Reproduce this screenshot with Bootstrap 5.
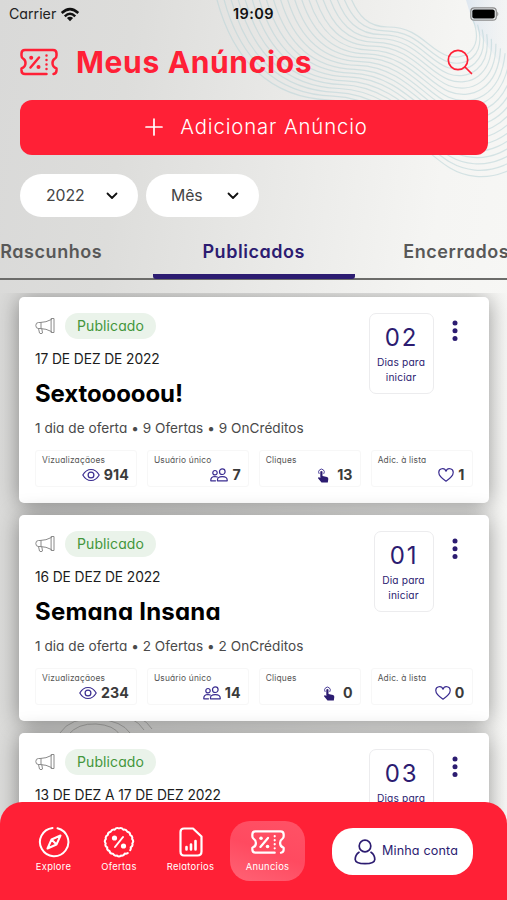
<!DOCTYPE html>
<html lang="pt-BR">
<head>
<meta charset="utf-8">
<meta name="viewport" content="width=device-width, initial-scale=1">
<title>Meus Anúncios</title>
<link href="https://cdn.jsdelivr.net/npm/bootstrap@5.3.0/dist/css/bootstrap.min.css" rel="stylesheet">
<style>
:root{--red:#ff2036;--navy:#2c1c71}
body{font-family:Inter,"Open Sans",sans-serif;font-feature-settings:"cv11";background:#ddd}
svg{display:block;flex-shrink:0}
.ln{fill:none;stroke:currentColor;stroke-linecap:round;stroke-linejoin:round}
.phone{width:507px;height:900px;background:linear-gradient(97deg,#d9d9d8 0,#dddddb 22%,#e9e9e7 48%,#f5f5f3 75%,#f8f8f6 100%)}
.waves{left:0;top:0;z-index:0;pointer-events:none}
.statusbar{height:28px;font-size:14.2px;color:#222;padding:0 8px 0 9px}
.clock{left:233px;top:3px;font-weight:600;font-size:14.5px;color:#111;letter-spacing:.4px}
.page-head{height:68px;padding:0 34px 0 20px;color:var(--red)}
.page-title{font-size:30px;font-weight:750;line-height:36px;letter-spacing:.65px;margin-left:18px}
.btn-add{margin:4px 19px 0 20px;height:55px;flex-shrink:0;border-radius:12px;background:var(--red)!important;color:#fff!important;font-size:20.3px;font-weight:350;letter-spacing:.9px;border:0;gap:17px;padding:0 0 1px 5px}
.filters{padding:19px 20px 0;gap:8px}
.pill{height:43px;border-radius:22px;background:#fff;font-size:15.8px;letter-spacing:-.1px;color:#444}
.pill-year{width:118px;padding:0 20px 0 26px}
.pill-month{width:113px;padding:0 20px 0 25px}
.pill svg{color:#111}
.tabs{height:63px;width:608px;margin-left:-50px;border-bottom:2px solid #6c6c6a}
.tab{width:202.5px;text-align:center;font-size:18px;letter-spacing:.55px;font-weight:600;color:#585858;padding-top:22px;height:62px;line-height:26px;white-space:nowrap}
.tab.on{color:var(--navy);border-bottom:5px solid var(--navy);border-radius:0 0 3px 3px}
.feed{margin-top:13px;height:607px;padding:3.5px 18.5px 0 19px}
.ad{height:206px;flex-shrink:0;border:0;border-radius:5px;padding:16.5px 16px 0 16px;margin-bottom:12px;box-shadow:0 2px 22px rgba(0,0,0,.4)}
.horn{color:#8a8a8a}
.status{height:26px;border-radius:13px;background:#eaf3ea;color:#43963b;font-size:14px;letter-spacing:.1px;line-height:26px;width:91px;text-align:center;margin-left:10px}
.date{font-size:13.8px;letter-spacing:-.1px;line-height:24px;margin-top:8px;color:#1c1c1c}
.ad-title{font-size:24px;letter-spacing:.2px;line-height:30px;font-weight:700;color:#000;margin:8px 0 0}
.ad-title.tight{letter-spacing:-.1px}
.meta{font-size:13.6px;letter-spacing:.03px;line-height:20px;margin-top:9px;color:#4a4a4a}
.count{width:65px;height:81px;flex-shrink:0;border:1.5px solid #ececee;border-radius:7px;color:var(--navy);text-align:center}
.count.slim{width:60px}
.count-num{font-size:24px;line-height:30px;letter-spacing:1.8px;padding:9px 0 0 1px}
.count-text{font-size:10.2px;letter-spacing:.15px;line-height:15px;margin-top:2px}
.dots{width:39px;padding:7px 0 0 18px;color:var(--navy)}
.stats{margin-top:12px;gap:10px}
.stat{width:102px;height:37px;border:1px solid #f7f7f7;border-radius:3px;padding:0 7px 0 6px;color:#3a2c90}
.stat-name{font-size:8.4px;letter-spacing:.19px;line-height:10px;margin-top:3.5px;color:#555}
.stat-row{height:21px;gap:4px}
.stat-num{font-size:14.2px;font-weight:650;line-height:20px;color:#3b3b3b;letter-spacing:.1px}
.tabbar{left:0;bottom:0;width:507px;height:98px;background:var(--red);border-radius:22px 22px 0 0;color:#fff;padding:0 34.5px 0 16px}
.item{width:75px;height:60px;font-size:9.4px;letter-spacing:.3px;line-height:12px;margin-top:19px;padding-top:5px;border-radius:20px}
.item.narrow{width:56px}
.item.mid{width:87px}
.item.on{margin-left:-4px;background:linear-gradient(200deg,#ff5266,#ff4a60 50%,#ff6375)}
.item svg{margin-bottom:3px}
.account{width:141px;height:47px;border-radius:21px;background:#fff;color:var(--navy);font-size:12.6px;letter-spacing:.14px;margin-top:26px;gap:6px;padding-left:8px}
</style>
<script src="https://cdn.jsdelivr.net/npm/bootstrap@5.3.0/dist/js/bootstrap.bundle.min.js"></script>
</head>
<body>
<svg width="0" height="0" class="position-absolute">
 <symbol id="ticket" viewBox="0 0 38 28"><g class="ln" stroke-width="2.500"><path d="M26.500 26H5Q1.500 26 1.500 22.500V20.500Q5.500 19 5.500 15Q5.500 12 3 10.500Q1.500 9.500 1.500 7.500V5.500Q1.500 2 5 2H33Q36.500 2 36.500 5.500V7.500Q36.500 9.500 35 10.500Q32.500 12 32.500 15Q32.500 19 36.500 20.500V22.500Q36.500 25.500 33.500 26"/><path d="M19 9.500L10.500 19.500"/><path d="M26.500 7.500v.1M26.500 12v.1M26.500 16.500v.1M26.500 21v.1"/></g><circle cx="11.200" cy="9.800" r="2" fill="currentColor"/><circle cx="18.500" cy="19" r="2" fill="currentColor"/></symbol>
 <symbol id="horn" viewBox="0 0 20 18"><g class="ln" stroke-width="1"><path d="M16.500 1.500h2.500v14h-2.500zM16.500 2.500Q11 5.500 5 5.500H3.500Q.8 5.500.8 8.500T3.500 11.500H5Q11 11.500 16.500 14.500M6 5.500v6M3.500 11.500l1 4.500Q6 17.500 7.500 16l-.7-4.300"/></g></symbol>
 <symbol id="eye" viewBox="0 0 18 14"><g class="ln" stroke-width="1.200"><path d="M.8 7Q4 1.500 9 1.500T17.200 7Q14 12.500 9 12.500T.8 7z"/><circle cx="9" cy="7" r="2.900"/></g></symbol>
 <symbol id="people" viewBox="0 0 18 14"><g class="ln" stroke-width="1.200"><circle cx="12.300" cy="3.700" r="2.800"/><circle cx="5" cy="4.700" r="2.200"/><path d="M7.500 12.800Q7 8.600 12.300 8.600T17.200 12.800zM5.500 12.800H.8Q.5 8.600 5 8.500Q6.500 8.500 7.200 9"/></g></symbol>
 <symbol id="tap" viewBox="0 0 12 15"><path d="M3.300 3.500Q4.400 2.400 5.500 3.500V8l4.500 1Q11.500 9.500 11.300 11l-.5 3.600H4.500L1 10.200Q1 9 2.200 9.200l1.100.7z" fill="#2c1c71"/><path class="ln" stroke-width=".9" d="M2 5.600A2.900 2.900 0 1 1 6.900 5.600"/></symbol>
 <symbol id="heart" viewBox="0 0 16 14"><path class="ln" stroke-width="1.200" d="M8 13.200Q.8 8.600.8 4.600A3.700 3.700 0 0 1 8 3.200A3.700 3.700 0 0 1 15.200 4.600Q15.200 8.600 8 13.200z"/></symbol>
 <symbol id="kebab" viewBox="0 0 6 22"><g fill="currentColor"><circle cx="3" cy="3" r="2.500"/><circle cx="3" cy="10.700" r="2.500"/><circle cx="3" cy="18.400" r="2.500"/></g></symbol>
 <symbol id="chev" viewBox="0 0 12 8"><path class="ln" stroke-width="1.800" d="M1.500 1.500L6 6L10.500 1.500"/></symbol>
 <symbol id="compass" viewBox="0 0 32 32"><g class="ln" stroke-width="2"><path d="M19.500 2.200A14.200 14.200 0 1 1 14.500 1.900"/><path d="M22.500 9.500L18.500 18.500L9.500 22.500L13.500 13.500zM13.500 13.500l5 5"/></g></symbol>
 <symbol id="seal" viewBox="0 0 32 32"><g class="ln" stroke-width="2"><path d="M24.800 27Q23.500 28 21.800 27.500Q20.500 30.300 18 29.500Q16 31.500 14 29.500Q11.300 30.500 10 27.700Q7 28 6.500 25Q3.500 24 4.300 21.300Q1.500 20 2.700 17.300Q.8 15 2.900 13Q2 10 4.800 9Q4.800 6 7.700 5.700Q9 2.800 11.700 3.700Q13.500 1 16 2.500Q18.500 1 20.300 3.700Q23 2.800 24.300 5.700Q27.200 6 27.200 9Q30 10 29.100 13Q31.200 15 29.300 17.300Q30.300 20 27.700 21.300Q28.200 22.700 27.200 24.200"/><path d="M20 11L12 21"/></g><circle cx="11.500" cy="12" r="2.600" fill="currentColor"/><circle cx="20.500" cy="20" r="2.600" fill="currentColor"/></symbol>
 <symbol id="report" viewBox="0 0 26 32"><g class="ln" stroke-width="2.200"><path d="M6 2.500H15L23.500 10.500V25.500Q23.500 29.500 19.500 29.500H6Q2.500 29.500 2.500 25.500V6Q2.500 2.500 6 2.500z"/><path d="M8.500 23.500V21M13 23.500V18.500M17.500 23.500V15" stroke-width="2.600"/></g></symbol>
 <symbol id="user" viewBox="0 0 22 26"><g class="ln" stroke-width="1.700"><circle cx="11" cy="7" r="5.800"/><path d="M5 13.300Q1.200 16 1.200 20.500Q1.500 24.700 11 24.700T20.800 20.500Q20.800 16 17 13.300"/></g></symbol>
</svg>
<main class="phone position-relative overflow-hidden d-flex flex-column">
 <svg class="waves position-absolute" width="507" height="900" viewBox="0 0 507 900">
  <defs><linearGradient id="haze" x1="0" x2="1"><stop offset="0" stop-color="#d5e1ee" stop-opacity=".7"/><stop offset="1" stop-color="#e8eef3" stop-opacity=".2"/></linearGradient></defs>
  <path d="M466 0H507V70Q486 48 472 20Z" fill="url(#haze)"/>
  <g id="lines" fill="none" stroke="#b9d4d8" stroke-width="1.200" opacity=".55"></g>
  <g fill="none" stroke="#a6a6a4" opacity=".8"><path d="M60 733q10-16 38-14q24 2 32 14M68 735q10-12 28-11q18 1 24 11M130 718q10 5 14 12M138 717q10 5 14 12"/></g>
 </svg>
 <div class="statusbar position-relative d-flex align-items-center">
  <span>Carrier</span>
  <svg class="ms-1" width="20" height="15" viewBox="0 0 20 15"><g fill="none" stroke="#111" stroke-width="2.500"><path d="M1.700 6Q10-1.800 18.300 6M4.800 9.300Q10 4.300 15.200 9.300"/></g><path d="M6.900 11Q10 8.500 13.100 11L10 14.200z" fill="#111"/></svg>
  <span class="clock position-absolute">19:09</span>
  <svg class="ms-auto" width="30" height="14" viewBox="0 0 30 14"><rect x="1.800" y=".8" width="25.500" height="12.400" rx="3.500" fill="none" stroke="#8b8b8b" stroke-width="1.200"/><rect x="3.300" y="2.400" width="22.400" height="9.200" rx="2" fill="#000"/><path d="M28.300 4.500q2 2.500 0 5z" fill="#888"/></svg>
 </div>
 <header class="page-head d-flex align-items-center position-relative">
  <svg width="38" height="28"><use href="#ticket"/></svg>
  <h1 class="page-title mb-0">Meus Anúncios</h1>
  <svg class="ms-auto" width="26" height="26" viewBox="0 0 26 26"><g class="ln" stroke-width="1.700"><circle cx="11" cy="11" r="9.700"/><path d="M18 18l6.500 6.500"/></g></svg>
 </header>
 <button class="btn btn-add d-flex align-items-center justify-content-center position-relative" type="button">
  <svg width="18" height="18" viewBox="0 0 18 18"><path class="ln" stroke-width="1.700" d="M9 1v16M1 9h16"/></svg><span>Adicionar Anúncio</span>
 </button>
 <div class="filters d-flex position-relative">
  <div class="pill pill-year d-flex align-items-center justify-content-between"><span>2022</span><svg width="12" height="8"><use href="#chev"/></svg></div>
  <div class="pill pill-month d-flex align-items-center justify-content-between"><span>Mês</span><svg width="12" height="8"><use href="#chev"/></svg></div>
 </div>
 <nav class="tabs d-flex flex-shrink-0"><div class="tab">Rascunhos</div><div class="tab on">Publicados</div><div class="tab">Encerrados</div></nav>
 <section class="feed overflow-hidden position-relative flex-shrink-0">
  <article class="card ad">
   <div class="d-flex align-items-start">
    <div class="flex-grow-1">
     <div class="d-flex align-items-center"><svg class="horn" width="20" height="18"><use href="#horn"/></svg><span class="status">Publicado</span></div>
     <div class="date">17 DE DEZ DE 2022</div>
     <h2 class="ad-title tight">Sextooooou!</h2>
     <div class="meta">1 dia de oferta • 9 Ofertas • 9 OnCréditos</div>
    </div>
    <div class="count"><div class="count-num">02</div><div class="count-text">Dias para<br>iniciar</div></div>
    <div class="dots"><svg width="6" height="22"><use href="#kebab"/></svg></div>
   </div>
   <div class="stats d-flex">
    <div class="stat"><div class="stat-name">Vizualizaçãoes</div><div class="stat-row d-flex align-items-center justify-content-end"><svg width="18" height="14"><use href="#eye"/></svg><span class="stat-num">914</span></div></div>
    <div class="stat"><div class="stat-name">Usuário único</div><div class="stat-row d-flex align-items-center justify-content-end"><svg width="18" height="14"><use href="#people"/></svg><span class="stat-num">7</span></div></div>
    <div class="stat"><div class="stat-name">Cliques</div><div class="stat-row d-flex align-items-center justify-content-end"><svg width="12" height="15"><use href="#tap"/></svg><span class="stat-num ps-1">13</span></div></div>
    <div class="stat"><div class="stat-name">Adic. à lista</div><div class="stat-row d-flex align-items-center justify-content-end"><svg width="16" height="14"><use href="#heart"/></svg><span class="stat-num">1</span></div></div>
   </div>
  </article>
  <article class="card ad">
   <div class="d-flex align-items-start">
    <div class="flex-grow-1">
     <div class="d-flex align-items-center"><svg class="horn" width="20" height="18"><use href="#horn"/></svg><span class="status">Publicado</span></div>
     <div class="date">16 DE DEZ DE 2022</div>
     <h2 class="ad-title">Semana Insana</h2>
     <div class="meta">1 dia de oferta • 2 Ofertas • 2 OnCréditos</div>
    </div>
    <div class="count slim"><div class="count-num">01</div><div class="count-text">Dia para<br>iniciar</div></div>
    <div class="dots"><svg width="6" height="22"><use href="#kebab"/></svg></div>
   </div>
   <div class="stats d-flex">
    <div class="stat"><div class="stat-name">Vizualizaçãoes</div><div class="stat-row d-flex align-items-center justify-content-end"><svg width="18" height="14"><use href="#eye"/></svg><span class="stat-num">234</span></div></div>
    <div class="stat"><div class="stat-name">Usuário único</div><div class="stat-row d-flex align-items-center justify-content-end"><svg width="18" height="14"><use href="#people"/></svg><span class="stat-num">14</span></div></div>
    <div class="stat"><div class="stat-name">Cliques</div><div class="stat-row d-flex align-items-center justify-content-end"><svg width="12" height="15"><use href="#tap"/></svg><span class="stat-num ps-1">0</span></div></div>
    <div class="stat"><div class="stat-name">Adic. à lista</div><div class="stat-row d-flex align-items-center justify-content-end"><svg width="16" height="14"><use href="#heart"/></svg><span class="stat-num">0</span></div></div>
   </div>
  </article>
  <article class="card ad">
   <div class="d-flex align-items-start">
    <div class="flex-grow-1">
     <div class="d-flex align-items-center"><svg class="horn" width="20" height="18"><use href="#horn"/></svg><span class="status">Publicado</span></div>
     <div class="date">13 DE DEZ A 17 DE DEZ 2022</div>
    </div>
    <div class="count"><div class="count-num">03</div><div class="count-text">Dias para</div></div>
    <div class="dots"><svg width="6" height="22"><use href="#kebab"/></svg></div>
   </div>
  </article>
 </section>
 <nav class="tabbar position-absolute d-flex align-items-start">
  <div class="item d-flex flex-column align-items-center"><svg width="32" height="32"><use href="#compass"/></svg>Explore</div>
  <div class="item narrow d-flex flex-column align-items-center"><svg width="32" height="32"><use href="#seal"/></svg>Ofertas</div>
  <div class="item mid d-flex flex-column align-items-center"><svg width="26" height="32"><use href="#report"/></svg>Relatorios</div>
  <div class="item on d-flex flex-column align-items-center"><svg width="34" height="32"><use href="#ticket"/></svg>Anuncios</div>
  <div class="account ms-auto d-flex align-items-center justify-content-center"><svg width="22" height="26"><use href="#user"/></svg>Minha conta</div>
 </nav>
</main>
<script>
// Background contour lines: blend between the innermost and the outermost curve
const inner=[350,-4, 358,16,368,27,388,27, 420,27,428,50,448,56, 466,61,484,48,473,20];
const outer=[216,-4, 232,60,270,98,330,100, 385,102,420,150,450,168, 480,186,530,180,560,110];
const count=19;
let paths='';
for(let i=0;i<=count;i++){
  const p=inner.map((v,k)=>(v+(outer[k]-v)*i/count).toFixed(1));
  paths+=`<path d="M${p.slice(0,2)}C${p.slice(2,8)} ${p.slice(8,14)} ${p.slice(14)}"/>`;
}
document.getElementById('lines').innerHTML=paths;
</script>
</body>
</html>
